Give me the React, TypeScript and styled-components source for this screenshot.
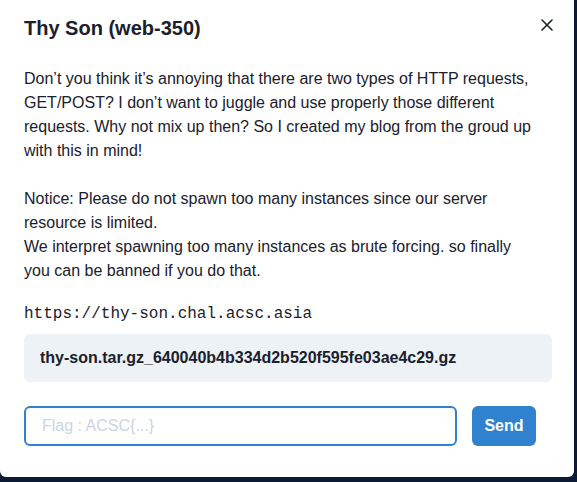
import styled, { createGlobalStyle } from 'styled-components'

const GlobalStyle = createGlobalStyle`
  html, body {
    margin: 0;
    padding: 0;
    background: #0c1a33;
    overflow: hidden;
  }
  * {
    box-sizing: border-box;
  }
`

const App: React.FC = () => {
  return (
    <>
      <GlobalStyle />
      <Backdrop>
        <Modal>
          <Header>
            <Title>Thy Son (web-350)</Title>
            <CloseButton aria-label="Close">
              <svg width="12" height="12" viewBox="0 0 12 12">
                <path d="M1 1L11 11M11 1L1 11" stroke="#1a202c" strokeWidth="1.6" strokeLinecap="round" />
              </svg>
            </CloseButton>
          </Header>

          <Body>
            <Description>
              Don’t you think it’s annoying that there are two types of HTTP requests,
              GET/POST? I don’t want to juggle and use properly those different
              requests. Why not mix up then? So I created my blog from the groud up
              with this in mind!
              <br />
              <br />
              Notice: Please do not spawn too many instances since our server
              resource is limited.
              <br />
              We interpret spawning too many instances as brute forcing. so finally
              <br />
              you can be banned if you do that.
            </Description>

            <Url>https://thy-son.chal.acsc.asia</Url>

            <FileBox>thy-son.tar.gz_640040b4b334d2b520f595fe03ae4c29.gz</FileBox>

            <FlagForm>
              <FlagInput placeholder="Flag : ACSC{...}" autoFocus />
              <SendButton type="button">Send</SendButton>
            </FlagForm>
          </Body>
        </Modal>
      </Backdrop>
    </>
  )
}

const Backdrop = styled.div`
  width: 577px;
  height: 482px;
  background: #0c1a33;
`

const Modal = styled.section`
  position: relative;
  width: 574px;
  height: 477px;
  background: #ffffff;
  border-radius: 0 0 6px 6px;
  font-family: "Liberation Sans", Arial, sans-serif;
  color: #1a202c;
`

const Header = styled.header`
  padding: 13px 22px 0 24px;
`

const Title = styled.h2`
  margin: 0;
  font-size: 20px;
  line-height: 30px;
  font-weight: 700;
`

const CloseButton = styled.button`
  position: absolute;
  top: 9px;
  right: 11px;
  width: 32px;
  height: 32px;
  display: flex;
  align-items: center;
  justify-content: center;
  border: none;
  background: transparent;
  border-radius: 6px;
  padding: 0;
  cursor: pointer;
`

const Body = styled.div`
  padding: 24px 22px 0 24px;
`

const Description = styled.p`
  margin: 0 0 19px;
  font-size: 16px;
  line-height: 24px;
`

const Url = styled.p`
  margin: 0 0 8px;
  font-family: "Liberation Mono", "DejaVu Sans Mono", monospace;
  font-size: 16px;
  line-height: 24px;
`

const FileBox = styled.div`
  background: #edf2f7;
  border-radius: 6px;
  padding: 12px 16px;
  font-size: 16px;
  line-height: 24px;
  font-weight: 700;
`

const FlagForm = styled.form`
  display: flex;
  gap: 15px;
  margin-top: 24px;
`

const FlagInput = styled.input`
  width: 433px;
  height: 40px;
  padding: 0 16px;
  border: 2px solid #3182ce;
  border-radius: 6px;
  font-family: inherit;
  font-size: 16px;
  color: #1a202c;
  outline: none;

  &::placeholder {
    color: #cbd5e0;
  }
`

const SendButton = styled.button`
  width: 64px;
  height: 40px;
  border: none;
  border-radius: 6px;
  background: #3182ce;
  color: #ffffff;
  font-family: inherit;
  font-size: 16px;
  font-weight: 700;
  cursor: pointer;
`

export default App
